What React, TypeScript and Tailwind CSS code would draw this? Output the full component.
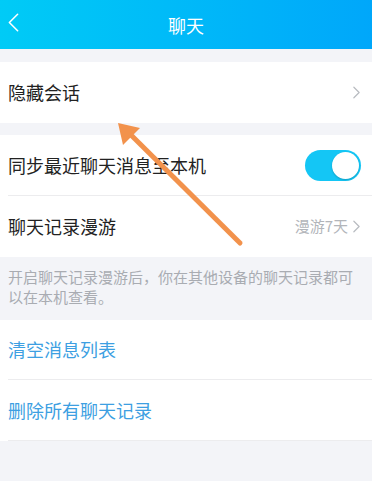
import React from 'react';

// Chat settings screen (QQ style) with an orange annotation arrow on top

const FONT = '"Noto Sans CJK SC", "Noto Sans", sans-serif';

function ChevronRight({ className = '' }: { className?: string }) {
  return (
    <svg viewBox="0 0 8 14" className={className} fill="none">
      <path d="M1 1l6 6-6 6" stroke="currentColor" strokeWidth="1.4" strokeLinecap="round" strokeLinejoin="round" />
    </svg>
  );
}

function Toggle() {
  return (
    <div className="w-[56px] h-[31px] rounded-full bg-[#14c6f5] flex items-center justify-end pr-[2px]">
      <div className="w-[27px] h-[27px] rounded-full bg-white shadow-[0_1px_2px_rgba(0,0,0,0.2)]" />
    </div>
  );
}

export default function App() {
  return (
    <div className="relative w-[372px] h-[481px] overflow-hidden bg-[#f3f4f8]" style={{ fontFamily: FONT }}>
      {/* Header */}
      <div className="relative h-[49px] flex items-center justify-center bg-gradient-to-r from-[#00cbf6] to-[#00a7fa]">
        <svg viewBox="0 0 12 20" className="absolute left-[8px] top-[13px] w-[11px] h-[19px]" fill="none">
          <path d="M10.5 1L1.5 10l9 9" stroke="white" strokeWidth="1.7" strokeLinecap="round" strokeLinejoin="round" />
        </svg>
        <span className="text-white text-[18px] leading-none">聊天</span>
      </div>

      {/* Hidden sessions */}
      <div className="mt-[13px] bg-white">
        <div className="h-[61px] flex items-center justify-between pl-[8px] pr-[12px]">
          <span className="text-[18px] text-[#222]">隐藏会话</span>
          <ChevronRight className="w-[7px] h-[13px] text-[#b8bbc0]" />
        </div>
      </div>

      {/* Sync & roaming */}
      <div className="mt-[12px] bg-white">
        <div className="ml-[8px] h-[61px] flex items-center justify-between pr-[11px] border-b border-[#ececee]">
          <span className="text-[18px] text-[#222]">同步最近聊天消息至本机</span>
          <Toggle />
        </div>
        <div className="h-[61px] flex items-center justify-between pl-[8px] pr-[12px]">
          <span className="text-[18px] text-[#222]">聊天记录漫游</span>
          <div className="flex items-center gap-[5px]">
            <span className="text-[15px] text-[#b2b5ba]">漫游7天</span>
            <ChevronRight className="w-[7px] h-[13px] text-[#b8bbc0]" />
          </div>
        </div>
      </div>

      {/* Note */}
      <div className="h-[63px] px-[8px] pt-[10px] text-[15px] leading-[20px] text-[#a9acb2]">
        开启聊天记录漫游后，你在其他设备的聊天记录都可以在本机查看。
      </div>

      {/* Actions */}
      <div className="bg-white">
        <div className="ml-[8px] h-[60px] flex items-center border-b border-[#ececee]">
          <span className="text-[18px] text-[#3d9fe2]">清空消息列表</span>
        </div>
        <div className="ml-[8px] h-[61px] flex items-center border-b border-[#ececee]">
          <span className="text-[18px] text-[#3d9fe2]">删除所有聊天记录</span>
        </div>
      </div>

      {/* Annotation arrow */}
      <svg className="absolute left-0 top-0 w-[372px] h-[481px] pointer-events-none" viewBox="0 0 372 481">
        <line x1="240" y1="243" x2="130" y2="134" stroke="#f2924c" strokeWidth="5" strokeLinecap="round" />
        <polygon points="118,123 140,128 123,145" fill="#f2924c" />
      </svg>
    </div>
  );
}
